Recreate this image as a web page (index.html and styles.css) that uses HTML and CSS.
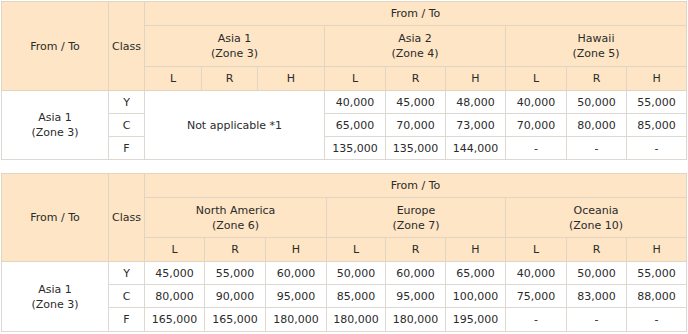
FILE: index.html
```html
<!DOCTYPE html>
<html>
<head>
<meta charset="utf-8">
<link rel="stylesheet" href="styles.css">
</head>
<body>
<div class="page">
<table class="fare">
  <colgroup>
    <col class="c-from"><col class="c-class">
    <col class="c-a"><col class="c-b"><col class="c-c">
    <col class="c-d"><col class="c-e"><col class="c-f">
    <col class="c-g"><col class="c-h"><col class="c-i">
  </colgroup>
  <tr class="r1"><th rowspan="3">From / To</th><th rowspan="3">Class</th><th colspan="9">From / To</th></tr>
  <tr class="r2"><th colspan="3">Asia 1<br>(Zone 3)</th><th colspan="3">Asia 2<br>(Zone 4)</th><th colspan="3">Hawaii<br>(Zone 5)</th></tr>
  <tr class="r3"><th>L</th><th>R</th><th>H</th><th>L</th><th>R</th><th>H</th><th>L</th><th>R</th><th>H</th></tr>
  <tr class="rd"><td rowspan="3">Asia 1<br>(Zone 3)</td><td>Y</td><td colspan="3" rowspan="3">Not applicable *1</td><td>40,000</td><td>45,000</td><td>48,000</td><td>40,000</td><td>50,000</td><td>55,000</td></tr>
  <tr class="rd"><td>C</td><td>65,000</td><td>70,000</td><td>73,000</td><td>70,000</td><td>80,000</td><td>85,000</td></tr>
  <tr class="rd"><td>F</td><td>135,000</td><td>135,000</td><td>144,000</td><td>-</td><td>-</td><td>-</td></tr>
</table>

<table class="fare second">
  <colgroup>
    <col class="c-from"><col class="c-class">
    <col class="d-a"><col class="d-b"><col class="d-c">
    <col class="d-d"><col class="c-e"><col class="c-f">
    <col class="c-g"><col class="c-h"><col class="c-i">
  </colgroup>
  <tr class="r1"><th rowspan="3">From / To</th><th rowspan="3">Class</th><th colspan="9">From / To</th></tr>
  <tr class="r2 r2b"><th colspan="3">North America<br>(Zone 6)</th><th colspan="3">Europe<br>(Zone 7)</th><th colspan="3">Oceania<br>(Zone 10)</th></tr>
  <tr class="r3"><th>L</th><th>R</th><th>H</th><th>L</th><th>R</th><th>H</th><th>L</th><th>R</th><th>H</th></tr>
  <tr class="rd"><td rowspan="3">Asia 1<br>(Zone 3)</td><td>Y</td><td>45,000</td><td>55,000</td><td>60,000</td><td>50,000</td><td>60,000</td><td>65,000</td><td>40,000</td><td>50,000</td><td>55,000</td></tr>
  <tr class="rd"><td>C</td><td>80,000</td><td>90,000</td><td>95,000</td><td>85,000</td><td>95,000</td><td>100,000</td><td>75,000</td><td>83,000</td><td>88,000</td></tr>
  <tr class="rd"><td>F</td><td>165,000</td><td>165,000</td><td>180,000</td><td>180,000</td><td>180,000</td><td>195,000</td><td>-</td><td>-</td><td>-</td></tr>
</table>
</div>
</body>
</html>
```

FILE: styles.css
```css
html, body {
  margin: 0;
  padding: 0;
  background: #ffffff;
}

.page {
  padding: 1px 0 0 1px;
  display: flex;
  flex-direction: column;
  gap: 13px;
  align-items: flex-start;
}

.fare {
  border-collapse: collapse;
  table-layout: fixed;
  width: 686px;
  font-family: "DejaVu Sans", Verdana, sans-serif;
  font-size: 11px;
  line-height: 15px;
  color: #2b2b2b;
}

.fare th,
.fare td {
  border: 1px solid #ddd8d1;
  padding: 0;
  text-align: center;
  vertical-align: middle;
  font-weight: normal;
}

.fare th {
  background: #fde5c5;
  border-color: #e2d4c2;
}

.fare td {
  background: #ffffff;
}

.c-from { width: 107px; }
.c-class { width: 36px; }
.c-a { width: 57px; }
.c-b { width: 56px; }
.c-c { width: 67px; }
.c-d { width: 61px; }
.c-e { width: 60px; }
.c-f { width: 60px; }
.c-g { width: 61px; }
.c-h { width: 60px; }
.c-i { width: 60px; }

.d-a { width: 60px; }
.d-b { width: 61px; }
.d-c { width: 61px; }
.d-d { width: 59px; }

.r1 { height: 24px; }
.r2 { height: 41px; }
.r2b { height: 40px; }
.r3 { height: 24px; }
.rd { height: 23px; }
.second .rd:last-child { height: 24px; }
```
